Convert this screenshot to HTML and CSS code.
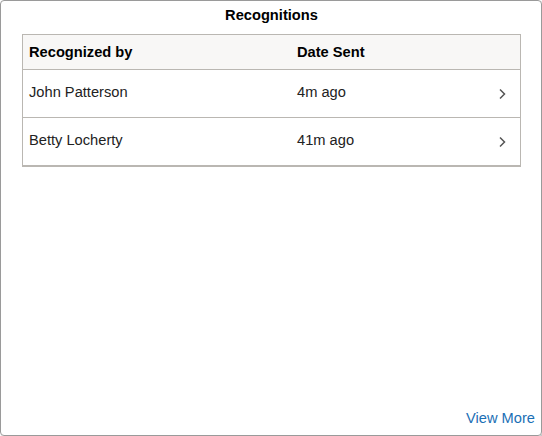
FILE: index.html
```html
<!DOCTYPE html>
<html>
<head>
<meta charset="utf-8">
<link rel="stylesheet" href="styles.css">
</head>
<body>
<div class="card">
  <h2 class="title">Recognitions</h2>
  <div class="grid">
    <div class="row head">
      <div class="c1">Recognized by</div>
      <div class="c2">Date Sent</div>
      <div class="c3"></div>
    </div>
    <div class="row body">
      <div class="c1">John Patterson</div>
      <div class="c2">4m ago</div>
      <div class="c3"><svg width="8" height="12" viewBox="0 0 8 12"><path d="M2 1.5 L6.5 6 L2 10.5" fill="none" stroke="#555" stroke-width="1.5"/></svg></div>
    </div>
    <div class="row body last">
      <div class="c1">Betty Locherty</div>
      <div class="c2">41m ago</div>
      <div class="c3"><svg width="8" height="12" viewBox="0 0 8 12"><path d="M2 1.5 L6.5 6 L2 10.5" fill="none" stroke="#555" stroke-width="1.5"/></svg></div>
    </div>
  </div>
  <div class="spacer"></div>
  <div class="footer"><a class="more" href="#">View More</a></div>
</div>
</body>
</html>
```
FILE: styles.css
```css
html, body {
  margin: 0;
  padding: 0;
  background: #fff;
}
body {
  font-family: "Liberation Sans", Arial, sans-serif;
  color: #222;
  font-size: 14.67px;
}
.card {
  box-sizing: border-box;
  width: 542px;
  height: 436px;
  border: 1px solid #9a9a9a;
  border-radius: 4px;
  box-shadow: 1px 1px 1px rgba(0,0,0,0.25);
  display: flex;
  flex-direction: column;
  padding: 0 20px 8px 21px;
}
.title {
  margin: 0;
  font-size: 14.67px;
  font-weight: bold;
  color: #000;
  text-align: center;
  line-height: 18px;
  padding: 5px 0 10px;
}
.grid {
  border: 1px solid #bab7b2;
  border-bottom-width: 2px;
}
.row {
  box-sizing: border-box;
  display: flex;
  align-items: center;
  height: 48px;
  border-bottom: 1px solid #bab7b2;
}
.row.body {
  padding-bottom: 3px;
}
.row.last {
  height: 47px;
  border-bottom: none;
}
.row.head {
  height: 35px;
  background: #f8f7f6;
  font-weight: bold;
  color: #000;
}
.c1 {
  width: 268px;
  padding-left: 6px;
}
.c2 {
  flex: 1;
}
.c3 {
  box-sizing: border-box;
  width: 26px;
  display: flex;
  align-items: center;
  padding-top: 3px;
  padding-left: 4px;
}
.spacer {
  flex: 1;
}
.footer {
  display: flex;
  justify-content: flex-end;
  margin-right: -14px;
}
.more {
  color: #1b6fb5;
  text-decoration: none;
  font-size: 14.67px;
  line-height: 18px;
}
```
